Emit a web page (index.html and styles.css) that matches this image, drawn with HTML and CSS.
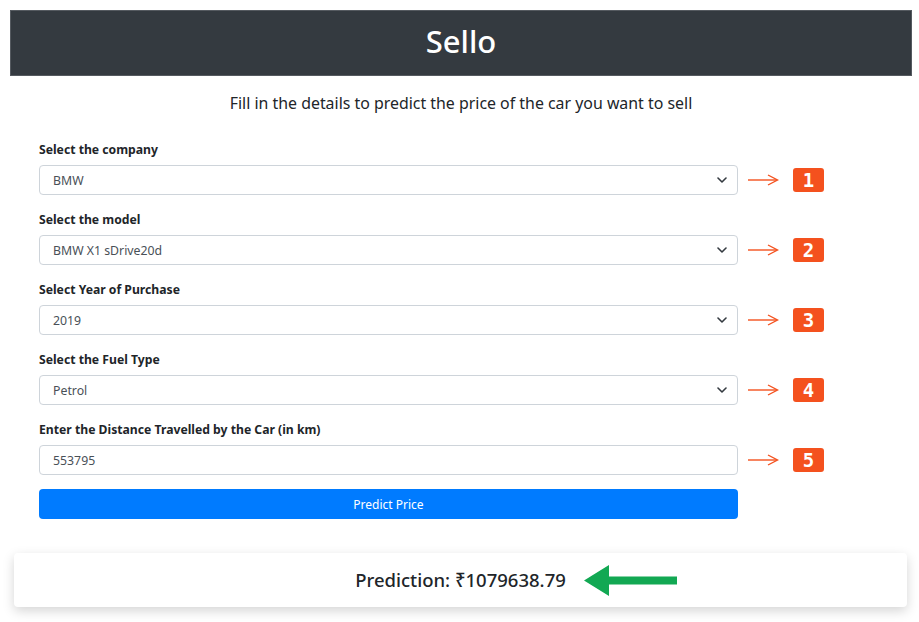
FILE: index.html
```html
<!DOCTYPE html>
<html lang="en">
<head>
<meta charset="utf-8">
<title>Sello</title>
<link rel="stylesheet" href="styles.css">
</head>
<body>
<div class="page">
  <header class="header"><h1 class="title">Sello</h1></header>
  <p class="subtitle">Fill in the details to predict the price of the car you want to sell</p>
  <form class="form">
    <div class="row">
      <div class="field">
        <label class="label">Select the company</label>
        <div class="control select"><span>BMW</span><svg class="chev" viewBox="0 0 10 6" width="10" height="6"><polyline points="1,1 5,5 9,1"/></svg></div>
      </div>
      <div class="marker">
        <svg class="arrow" viewBox="0 0 31 12" width="31" height="12"><line x1="0" y1="6" x2="29" y2="6"/><polyline points="20,1 29.5,6 20,11"/></svg>
        <span class="badge">1</span>
      </div>
    </div>
    <div class="row">
      <div class="field">
        <label class="label">Select the model</label>
        <div class="control select"><span>BMW X1 sDrive20d</span><svg class="chev" viewBox="0 0 10 6" width="10" height="6"><polyline points="1,1 5,5 9,1"/></svg></div>
      </div>
      <div class="marker">
        <svg class="arrow" viewBox="0 0 31 12" width="31" height="12"><line x1="0" y1="6" x2="29" y2="6"/><polyline points="20,1 29.5,6 20,11"/></svg>
        <span class="badge">2</span>
      </div>
    </div>
    <div class="row">
      <div class="field">
        <label class="label">Select Year of Purchase</label>
        <div class="control select"><span>2019</span><svg class="chev" viewBox="0 0 10 6" width="10" height="6"><polyline points="1,1 5,5 9,1"/></svg></div>
      </div>
      <div class="marker">
        <svg class="arrow" viewBox="0 0 31 12" width="31" height="12"><line x1="0" y1="6" x2="29" y2="6"/><polyline points="20,1 29.5,6 20,11"/></svg>
        <span class="badge">3</span>
      </div>
    </div>
    <div class="row">
      <div class="field">
        <label class="label">Select the Fuel Type</label>
        <div class="control select"><span>Petrol</span><svg class="chev" viewBox="0 0 10 6" width="10" height="6"><polyline points="1,1 5,5 9,1"/></svg></div>
      </div>
      <div class="marker">
        <svg class="arrow" viewBox="0 0 31 12" width="31" height="12"><line x1="0" y1="6" x2="29" y2="6"/><polyline points="20,1 29.5,6 20,11"/></svg>
        <span class="badge">4</span>
      </div>
    </div>
    <div class="row">
      <div class="field">
        <label class="label">Enter the Distance Travelled by the Car (in km)</label>
        <div class="control"><span>553795</span></div>
      </div>
      <div class="marker">
        <svg class="arrow" viewBox="0 0 31 12" width="31" height="12"><line x1="0" y1="6" x2="29" y2="6"/><polyline points="20,1 29.5,6 20,11"/></svg>
        <span class="badge">5</span>
      </div>
    </div>
    <div class="btn-row">
      <div class="btn">Predict Price</div>
    </div>
  </form>
  <div class="result">
    <span class="result-text">Prediction: ₹1079638.79<svg class="green-arrow" viewBox="0 0 93 31" width="93" height="31"><polygon points="0,15.5 25,0 25,11.5 93,11.5 93,19.5 25,19.5 25,31"/></svg></span>
  </div>
</div>
</body>
</html>
```

FILE: styles.css
```css
* { box-sizing: border-box; }
html, body { margin: 0; padding: 0; background: #fff; }
body {
  font-family: "Noto Sans", "Open Sans", sans-serif;
  color: #212529;
  width: 919px;
  height: 622px;
  overflow: hidden;
}
.page { padding: 10px 7px 0 10px; }
.header {
  background: #343a40;
  height: 66px;
  width: 902px;
  display: flex;
  align-items: center;
  justify-content: center;
  border: 1px solid #555a60;
}
.title {
  margin: 0;
  color: #fff;
  font-size: 31px;
  font-weight: 500;
  line-height: 1;
  padding-bottom: 3px;
}
.subtitle {
  margin: 0;
  height: 54px;
  padding-top: 15px;
  text-align: center;
  font-size: 15.9px;
  line-height: 24px;
  color: #212529;
}
.form {
  margin: 10px 0 0 29px;
  display: flex;
  flex-direction: column;
}
.row {
  display: flex;
  align-items: flex-end;
  margin-bottom: 15px;
}
.field { width: 699px; display: flex; flex-direction: column; }
.label {
  font-size: 12.2px;
  font-weight: 700;
  line-height: 18px;
  margin-top: 1px;
  margin-bottom: 6px;
  color: #212529;
}
.control {
  height: 30px;
  border: 1px solid #ced4da;
  border-radius: 4px;
  display: flex;
  align-items: center;
  justify-content: space-between;
  padding: 0 10px 0 13px;
  font-size: 12.3px;
  color: #495057;
}
.chev { fill: none; stroke: #343a40; stroke-width: 1.6; stroke-linecap: round; stroke-linejoin: round; }
.marker {
  height: 30px;
  display: flex;
  align-items: center;
  margin-left: 10px;
  gap: 14px;
}
.arrow { fill: none; stroke: #f4511e; stroke-width: 1.4; }
.badge {
  width: 31px;
  height: 24px;
  background: #f4511e;
  border-radius: 3px;
  color: #fff;
  font-family: "DejaVu Sans Mono", monospace;
  font-weight: 700;
  font-size: 19px;
  line-height: 24px;
  text-align: center;
}
.btn-row { margin-top: -1px; }
.btn {
  width: 699px;
  height: 30px;
  background: #007bff;
  border-radius: 4px;
  color: #fff;
  font-size: 12px;
  display: flex;
  align-items: center;
  justify-content: center;
}
.result {
  margin: 34px 0 0 4px;
  width: 893px;
  height: 54px;
  border-radius: 4px;
  background: #fff;
  box-shadow: 0 4px 12px rgba(0,0,0,0.17);
  display: flex;
  align-items: center;
  justify-content: center;
}
.result-text {
  position: relative;
  font-size: 18.5px;
  font-weight: 500;
  color: #212529;
  line-height: 24px;
}
.green-arrow {
  position: absolute;
  left: calc(100% + 18px);
  top: -3px;
  fill: #12a853;
}
```
